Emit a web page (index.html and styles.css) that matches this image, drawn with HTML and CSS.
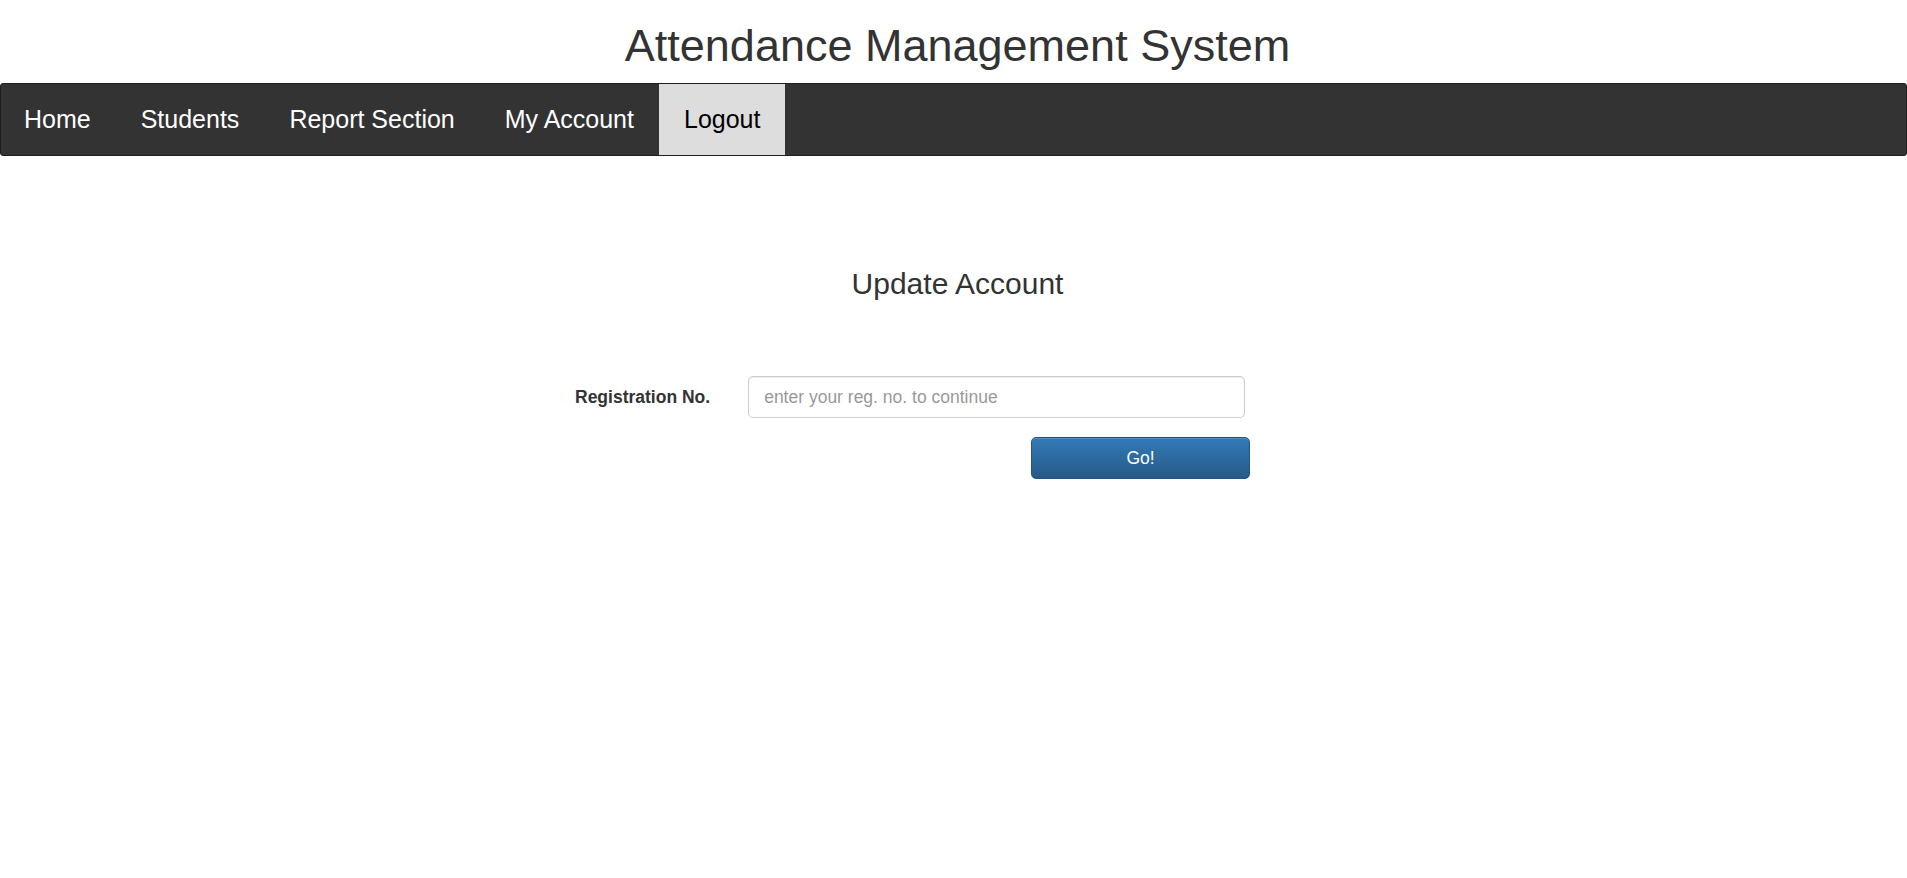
FILE: index.html
```html
<!DOCTYPE html>
<html>
<head>
<meta charset="utf-8">
<title>Attendance Management System</title>
<link rel="stylesheet" href="styles.css">
</head>
<body>
<header class="page-header">
  <h1 class="site-title">Attendance Management System</h1>
</header>
<nav class="navbar">
  <a class="nav-link" href="#">Home</a>
  <a class="nav-link" href="#">Students</a>
  <a class="nav-link" href="#">Report Section</a>
  <a class="nav-link" href="#">My Account</a>
  <a class="nav-link active" href="#">Logout</a>
</nav>
<main class="content">
  <h3 class="section-title">Update Account</h3>
  <form class="reg-form">
    <div class="form-row">
      <label class="form-label" for="reg">Registration No.</label>
      <input class="form-input" id="reg" type="text" placeholder="enter your reg. no. to continue">
    </div>
    <div class="form-row button-row">
      <button class="btn-go" type="button">Go!</button>
    </div>
  </form>
</main>
</body>
</html>
```

FILE: styles.css
```css
html, body {
  margin: 0;
  padding: 0;
  background: #fff;
}
body {
  font-family: "Liberation Sans", Arial, sans-serif;
  color: #333;
}
.page-header {
  padding: 21px 0 0 8px;
  height: 62px;
}
.site-title {
  margin: 0;
  font-size: 45px;
  line-height: 50px;
  font-weight: normal;
  text-align: center;
  color: #333;
}
.navbar {
  display: flex;
  height: 71px;
  background: #333;
  border: 1px solid #1e1e1e;
  border-radius: 3px;
}
.nav-link {
  display: block;
  padding: 0 25px;
  font-size: 25px;
  line-height: 71px;
  color: #fff;
  text-decoration: none;
}
.nav-link:first-child {
  padding-left: 23px;
}
.nav-link.active {
  background: #ddd;
  color: #000;
}
.content {
  padding-left: 8px;
}
.section-title {
  margin: 111px 0 0;
  font-size: 30px;
  line-height: 33px;
  font-weight: normal;
  text-align: center;
  color: #333;
}
.reg-form {
  margin: 76px 0 0 567px;
  width: 675px;
}
.form-row {
  display: flex;
  align-items: center;
}
.form-label {
  flex: 0 0 135px;
  white-space: nowrap;
  text-align: right;
  font-size: 17.5px;
  font-weight: bold;
  line-height: 42px;
  color: #333;
}
.form-input {
  flex: 0 0 497px;
  margin-left: 38px;
  width: 497px;
  height: 42px;
  box-sizing: border-box;
  padding: 0 15px;
  border: 1px solid #ccc;
  border-radius: 5px;
  box-shadow: inset 0 1px 1px rgba(0,0,0,.075);
  font-family: "Liberation Sans", Arial, sans-serif;
  font-size: 17.5px;
  color: #555;
  outline: none;
}
.form-input::placeholder {
  color: #999;
}
.button-row {
  margin-top: 19px;
}
.btn-go {
  margin-left: 456px;
  width: 219px;
  height: 42px;
  box-sizing: border-box;
  border: 1px solid #245580;
  border-radius: 5px;
  background: linear-gradient(to bottom, #337ab7 0%, #265a88 100%);
  color: #fff;
  font-family: "Liberation Sans", Arial, sans-serif;
  font-size: 17.5px;
  box-shadow: inset 0 1px 0 rgba(255,255,255,.15), 0 1px 1px rgba(0,0,0,.075);
  cursor: pointer;
}
```
